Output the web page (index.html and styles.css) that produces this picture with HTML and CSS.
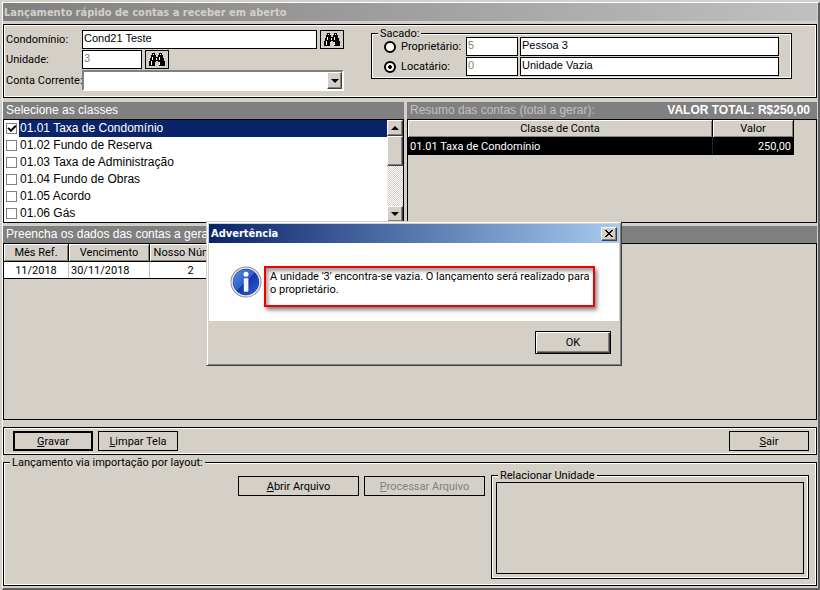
FILE: index.html
```
<!DOCTYPE html>
<html lang="pt-br">
<head>
	<meta charset="utf-8">
	<title>Lançamento rápido de contas a receber em aberto</title>
	<link rel="stylesheet" href="styles.css">
</head>
<body>
<svg class="defs" aria-hidden="true">
	<symbol id="binoculars" viewBox="0 0 16 14">
		<path d="M3 0h3v2h1v2h2v-2h1v-2h3v2h1v3h1v3h1v5h-6v-4h-1v-1h-2v1h-1v4h-6v-5h1v-3h1v-3h1z" fill="#000"/>
		<path d="M4 1h1v1h-1zM11 1h1v1h-1zM3 4h1v3h-1zM10 4h1v3h-1zM2 8h1v4h-1zM10 9h1v3h-1zM7 5h1v2h-1z" fill="#fff"/>
	</symbol>
</svg>
<main class="window">
	<h1 class="window_title">Lançamento rápido de contas a receber em aberto</h1>

	<form class="panel filters">
		<div class="account_fields">
			<div class="field">
				<label for="condominio">Condomínio:</label>
				<input type="text" id="condominio" class="box wide" value="Cond21 Teste">
				<button type="button" class="btn find" aria-label="Buscar condomínio"><svg><use href="#binoculars"/></svg></button>
			</div>
			<div class="field">
				<label for="unidade">Unidade:</label>
				<input type="text" id="unidade" class="box code short" value="3">
				<button type="button" class="btn find" aria-label="Buscar unidade"><svg><use href="#binoculars"/></svg></button>
			</div>
			<div class="field">
				<label for="conta">Conta Corrente:</label>
				<div class="combo">
					<select id="conta"><option></option></select>
					<span class="combo_arrow"><i class="arrow down"></i></span>
				</div>
			</div>
		</div>
		<fieldset class="group sacado">
			<legend>Sacado:</legend>
			<div class="people">
				<div class="person">
					<input type="radio" name="sacado" id="proprietario">
					<label for="proprietario">Proprietário:</label>
					<input type="text" class="box code" value="5" aria-label="Código do proprietário">
					<input type="text" class="box name" value="Pessoa 3" aria-label="Nome do proprietário">
				</div>
				<div class="person">
					<input type="radio" name="sacado" id="locatario" checked>
					<label for="locatario">Locatário:</label>
					<input type="text" class="box code" value="0" aria-label="Código do locatário">
					<input type="text" class="box name" value="Unidade Vazia" aria-label="Nome do locatário">
				</div>
			</div>
		</fieldset>
	</form>

	<div class="columns">
		<section class="section">
			<h2 class="section_title">Selecione as classes</h2>
			<div class="class_list">
				<div class="class_items">
					<label class="selected"><input type="checkbox" checked><span>01.01 Taxa de Condomínio</span></label>
					<label><input type="checkbox"><span>01.02 Fundo de Reserva</span></label>
					<label><input type="checkbox"><span>01.03 Taxa de Administração</span></label>
					<label><input type="checkbox"><span>01.04 Fundo de Obras</span></label>
					<label><input type="checkbox"><span>01.05 Acordo</span></label>
					<label><input type="checkbox"><span>01.06 Gás</span></label>
				</div>
				<div class="scrollbar">
					<button type="button" class="raised" aria-label="Subir"><i class="arrow up"></i></button>
					<div class="thumb raised"></div>
					<button type="button" class="raised" aria-label="Descer"><i class="arrow down"></i></button>
				</div>
			</div>
		</section>
		<section class="section">
			<h2 class="section_title"><span class="muted">Resumo das contas (total a gerar):</span><strong>VALOR TOTAL: R$250,00</strong></h2>
			<div class="grid_area">
				<table class="summary">
					<tr><th class="col_class">Classe de Conta</th><th class="col_value">Valor</th></tr>
					<tr><td>01.01 Taxa de Condomínio</td><td class="number">250,00</td></tr>
				</table>
			</div>
		</section>
	</div>

	<section class="section bills">
		<h2 class="section_title">Preencha os dados das contas a gerar</h2>
		<div class="grid_area">
			<table class="entries">
				<tr><th class="col_month">Mês Ref.</th><th class="col_due">Vencimento</th><th>Nosso Número</th></tr>
				<tr><td class="center">11/2018</td><td>30/11/2018</td><td class="center">2</td></tr>
			</table>
		</div>
	</section>

	<div class="panel actions">
		<button type="button" class="btn default"><u>G</u>ravar</button>
		<button type="button" class="btn"><u>L</u>impar Tela</button>
		<button type="button" class="btn exit"><u>S</u>air</button>
	</div>

	<fieldset class="group import">
		<legend>Lançamento via importação por layout:</legend>
		<div class="import_row">
			<button type="button" class="btn large"><u>A</u>brir Arquivo</button>
			<button type="button" class="btn large" disabled><u>P</u>rocessar Arquivo</button>
			<fieldset class="group relate">
				<legend>Relacionar Unidade</legend>
				<div class="relate_area"></div>
			</fieldset>
		</div>
	</fieldset>
</main>

<div class="dialog" role="dialog" aria-labelledby="dialog_title">
	<div class="dialog_title">
		<h2 id="dialog_title">Advertência</h2>
		<button type="button" class="raised close" aria-label="Fechar">
			<svg viewBox="0 0 8 7"><path d="M0 0h2v1h1v1h2v-1h1v-1h2v1h-1v1h-1v1h-1v1h1v1h1v1h1v1h-2v-1h-1v-1h-2v1h-1v1h-2v-1h1v-1h1v-1h1v-1h-1v-1h-1v-1h-1z"/></svg>
		</button>
	</div>
	<div class="dialog_body">
		<svg class="info" viewBox="0 0 32 32">
			<defs>
				<linearGradient id="blue" x1="0" y1="0" x2="1" y2="1">
					<stop offset="0" stop-color="#5c8de0"/>
					<stop offset=".48" stop-color="#2c5fca"/>
					<stop offset=".5" stop-color="#1436a8"/>
					<stop offset="1" stop-color="#2a62dc"/>
				</linearGradient>
			</defs>
			<circle cx="16" cy="16" r="15.5" fill="#8b8d94"/>
			<circle cx="16" cy="16" r="14.6" fill="#e6e8ec"/>
			<circle cx="16" cy="16" r="13.2" fill="#2447a8"/>
			<circle cx="16" cy="16" r="12.6" fill="url(#blue)"/>
			<circle cx="16" cy="8.2" r="2.5" fill="#fff"/>
			<rect x="13.8" y="12.2" width="4.6" height="13.6" rx="1" fill="#f2f4fa"/>
		</svg>
		<p class="message">A unidade '3' encontra-se vazia. O lançamento será realizado para o proprietário.</p>
	</div>
	<div class="dialog_footer">
		<button type="button" class="ok">OK</button>
	</div>
</div>
</body>
</html>
```
FILE: styles.css
```
*{
	box-sizing: border-box;
}
html, body{
	margin: 0;
	padding: 0;
}
body{
	display: flex;
	flex-direction: column;
	min-height: 100vh;
	padding: 2px 0 0 2px;
	background: #d4d0c8;
	color: #000;
	font-family: Roboto, "Liberation Sans", sans-serif;
	font-size: 11px;
	line-height: 13px;
}
button, input, select{
	font: inherit;
	color: inherit;
	margin: 0;
	padding: 0;
	border-radius: 0;
}
h1, h2, p{
	margin: 0;
	font-size: inherit;
	font-weight: normal;
}
.defs{
	position: absolute;
	width: 0;
	height: 0;
}
.window{
	flex: 1;
	display: flex;
	flex-direction: column;
	padding: 0 1px 2px 0;
	border-style: solid;
	border-width: 1px 2px 2px 1px;
	border-color: #fff #606060 #606060 #fff;
}
.window_title{
	height: 18px;
	margin-bottom: 3px;
	padding-left: 1px;
	background: linear-gradient(to right, #808080, #c0c0c0);
	color: #d4d0c8;
	font-family: "DejaVu Sans Condensed", Tahoma, sans-serif;
	font-weight: bold;
	line-height: 19px;
}
.panel, .group{
	border: 1px solid #000;
	box-shadow: inset 0 0 0 1px #fff;
}
.group{
	margin: 0;
	min-width: 0;
}
.group > legend{
	background: #d4d0c8;
	padding: 0 2px;
}

/* filters */
.filters{
	display: flex;
	justify-content: space-between;
	padding: 5px 24px 6px 2px;
}
.account_fields{
	display: flex;
	flex-direction: column;
	gap: 1px;
}
.field{
	display: flex;
	align-items: center;
}
.field label{
	width: 76px;
	white-space: nowrap;
}
.box{
	height: 19px;
	padding: 0 1px 3px;
	border: 1px solid #000;
	background: #fff;
	font-family: "Liberation Sans", Arial, sans-serif;
}
.wide{
	width: 235px;
}
.short{
	width: 60px;
}
.code{
	color: #808080;
}
.combo{
	position: relative;
	width: 262px;
	height: 21px;
	border: 2px solid;
	border-color: #808080 #fff #fff #808080;
	background: #fff;
}
.combo select{
	width: 100%;
	height: 100%;
	border: 0;
	background: #fff;
	appearance: none;
}
.combo_arrow{
	position: absolute;
	top: 0;
	right: 0;
	bottom: 0;
	width: 15px;
	pointer-events: none;
}
.combo_arrow, .raised{
	display: flex;
	align-items: center;
	justify-content: center;
	border: 1px solid;
	border-color: #fff #404040 #404040 #fff;
	background: #d4d0c8;
	box-shadow: inset -1px -1px 0 #808080;
}
.arrow{
	width: 0;
	height: 0;
	border: 4px solid transparent;
}
.arrow.down{
	border-top-color: #000;
	border-bottom-width: 0;
}
.arrow.up{
	border-bottom-color: #000;
	border-top-width: 0;
}
.btn{
	width: 80px;
	height: 20px;
	border: 1px solid #000;
	background: #d4d0c8;
}
.btn.default{
	border-width: 2px;
}
.btn.large{
	width: 121px;
}
.btn:disabled{
	color: #808080;
}
.find{
	width: 24px;
	height: 19px;
	margin-left: 3px;
	display: flex;
	align-items: center;
	justify-content: center;
}
.find svg{
	width: 16px;
	height: 14px;
	shape-rendering: crispEdges;
}
.sacado{
	width: 421px;
	align-self: flex-start;
	margin-top: -3px;
	padding: 0 12px 1px;
}
.sacado > legend{
	margin-left: -6px;
}
.people{
	margin-top: -3px;
}
.person{
	display: flex;
	align-items: center;
	gap: 2px;
	margin-bottom: 1px;
}
.person label{
	width: 66px;
	padding-left: 3px;
}
.person .code{
	width: 52px;
}
.person .name{
	flex: 1;
}
.person input[type=radio]{
	appearance: none;
	width: 12px;
	height: 12px;
	border: 2px solid #000;
	border-radius: 50%;
	background: #fff;
}
.person input[type=radio]:checked{
	background: radial-gradient(circle, #000 2px, #fff 2px);
}

/* class list and summary */
.columns{
	display: grid;
	grid-template-columns: 401fr 410fr;
	gap: 3px;
	margin: 4px 0 3px;
}
.section{
	display: flex;
	flex-direction: column;
	min-width: 0;
}
.section_title{
	display: flex;
	justify-content: space-between;
	height: 17px;
	padding: 0 7px 0 3px;
	background: #808080;
	color: #fff;
	font-family: "Liberation Sans", Arial, sans-serif;
	font-size: 12px;
	line-height: 16px;
	white-space: nowrap;
}
.muted{
	color: #c0c0c0;
}
.class_list{
	display: flex;
	border: 1px solid #000;
	background: #fff;
	font-family: "Liberation Sans", Arial, sans-serif;
	font-size: 12px;
}
.class_items{
	flex: 1;
}
.class_items label{
	display: flex;
	align-items: center;
	height: 17px;
	padding-left: 2px;
}
.class_items span{
	flex: 1;
	margin-left: 2px;
	padding-left: 1px;
	line-height: 17px;
}
.class_items .selected span{
	background: #0a246a;
	color: #fff;
}
.class_items input{
	appearance: none;
	position: relative;
	width: 11px;
	height: 11px;
	border: 1px solid #808080;
	background: #fff;
}
.class_items input:checked:before{
	content: '';
	position: absolute;
	top: 1px;
	left: 1px;
	width: 6px;
	height: 3px;
	border: solid #000;
	border-width: 0 0 2px 2px;
	transform: rotate(-45deg);
}
.scrollbar{
	display: flex;
	flex-direction: column;
	width: 16px;
	background: repeating-conic-gradient(#fff 0 25%, #d4d0c8 0 50%) 0 0 / 2px 2px;
}
.scrollbar button{
	height: 16px;
}
.scrollbar .thumb{
	height: 30px;
	margin-bottom: auto;
}
.grid_area{
	flex: 1;
	border: 1px solid #000;
}
table{
	border-collapse: separate;
	border-spacing: 0;
	table-layout: fixed;
	border: solid #000;
	border-width: 0 0 1px;
}
th, td{
	padding: 0 2px;
	height: 18px;
	font-weight: normal;
	text-align: left;
	border-right: 1px solid #000;
}
th{
	text-align: center;
	white-space: nowrap;
	border-bottom: 1px solid #000;
	background: #d4d0c8;
	box-shadow: inset 1px 1px 0 #fff, inset -1px -1px 0 #808080;
}
td{
	height: 16px;
}
.summary{
	width: 386px;
}
.summary td{
	background: #000;
	color: #fff;
}
.summary td:first-child{
	border-right-color: #223;
}
.col_value{
	width: 81px;
}
td.number{
	text-align: right;
}
td.center{
	text-align: center;
}
.entries{
	width: 228px;
}
.entries td{
	background: #fff;
	border-right-color: #c0c0c0;
}
.col_month{
	width: 65px;
}
.col_due{
	width: 81px;
}
.bills{
	flex: 1;
	min-height: 120px;
}

/* buttons */
.actions{
	display: flex;
	gap: 5px;
	margin: 7px 0 1px;
	padding: 3px 7px 3px 9px;
}
.exit{
	margin-left: auto;
}

/* import */
.import{
	padding: 0 7px 6px;
}
.import > legend{
	margin-left: -1px;
}
.import_row{
	display: flex;
	justify-content: flex-end;
	gap: 5px;
}
.import_row .btn{
	margin-top: 7px;
}
.relate{
	width: 318px;
	margin-left: 1px;
	padding: 0 4px 4px;
}
.relate > legend{
	margin-left: 2px;
}
.relate_area{
	height: 92px;
	border: 1px solid #000;
}

/* warning dialog */
.dialog{
	position: absolute;
	top: 221px;
	left: 206px;
	width: 416px;
	padding: 1px;
	border: 1px solid;
	border-color: #d4d0c8 #404040 #404040 #d4d0c8;
	background: #d4d0c8;
	box-shadow: inset 1px 1px 0 #fff, inset -1px -1px 0 #808080;
}
.dialog_title{
	display: flex;
	align-items: center;
	justify-content: space-between;
	height: 19px;
	margin: 1px 1px 0;
	padding: 0 2px;
	background: linear-gradient(to right, #0a246a, #a6caf0);
	color: #fff;
	font-family: "DejaVu Sans Condensed", Tahoma, sans-serif;
}
.dialog_title h2{
	font-weight: bold;
}
.close{
	width: 16px;
	height: 14px;
}
.close svg{
	width: 8px;
	height: 7px;
	shape-rendering: crispEdges;
}
.dialog_body{
	display: flex;
	gap: 2px;
	margin: 0 1px;
	padding: 23px 24px 14px 21px;
	background: #fff;
}
.info{
	width: 32px;
	height: 32px;
}
.message{
	flex: 1;
	height: 41px;
	padding: 2px 0 2px 4px;
	border: 2px solid #f00000;
	box-shadow: 2px 3px 4px rgba(0,0,0,.5), inset 2px 3px 4px rgba(0,0,0,.4);
}
.dialog_footer{
	display: flex;
	justify-content: flex-end;
	padding: 10px 9px;
}
.ok{
	width: 76px;
	height: 23px;
	border: 1px solid #000;
	background: #d4d0c8;
	box-shadow: inset 1px 1px 0 #fff, inset -1px -1px 0 #404040, inset -2px -2px 0 #808080;
}
```
